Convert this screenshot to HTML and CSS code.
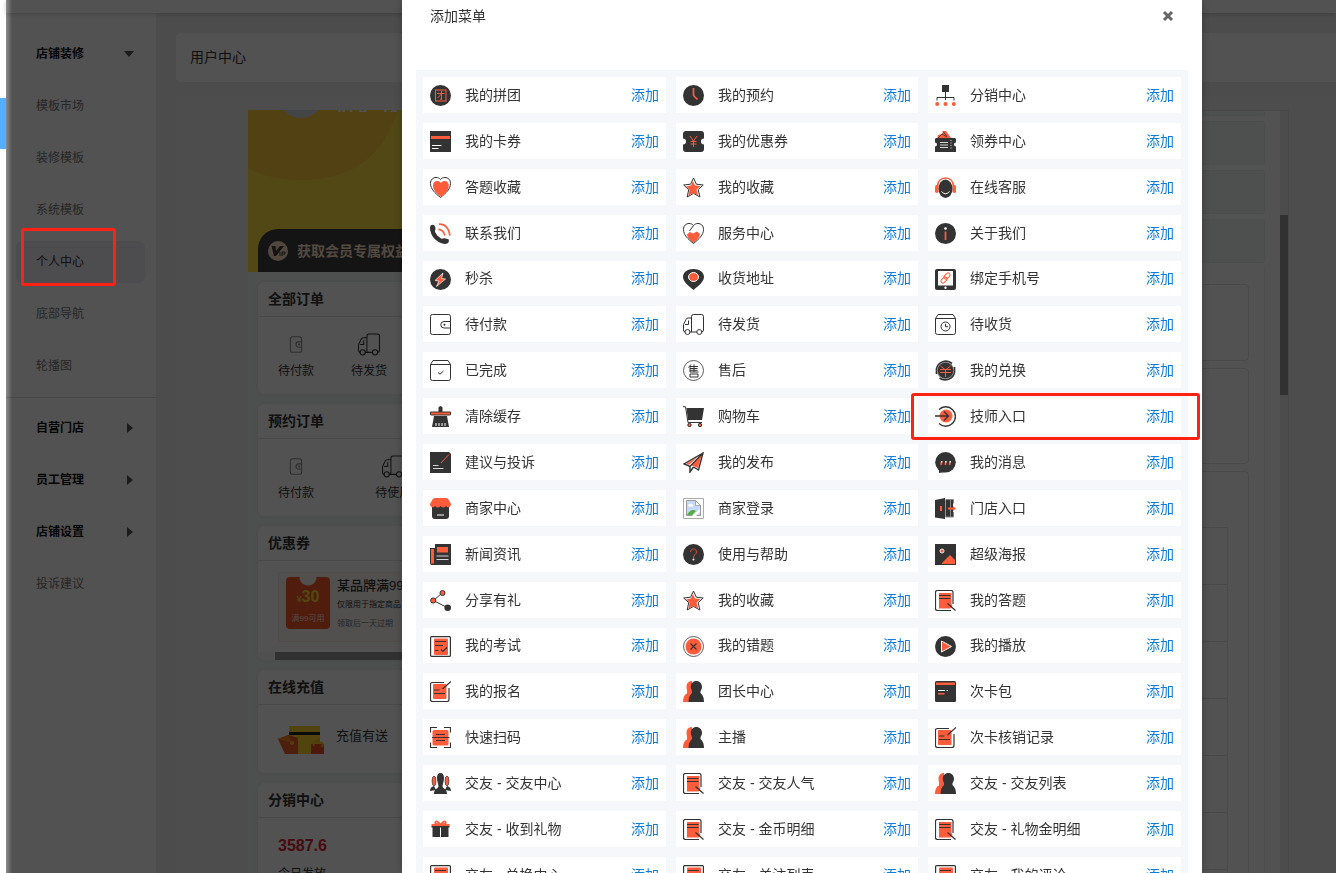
FILE: index.html
```html
<!DOCTYPE html>
<html lang="zh-CN">
<head>
<meta charset="utf-8">
<title>添加菜单</title>
<link rel="stylesheet" href="styles.css">
</head>
<body>
<svg class="sprite" aria-hidden="true">
<symbol id="tuan" viewBox="0 0 21 21"><circle class="d" cx="10.5" cy="10.5" r="10.5"/><rect class="so" x="5.5" y="5" width="10.5" height="11"/><path class="so" d="M7 8.5h7.500M11.500 6v8.500l-1.500-.5M11.500 9L7.500 13"/></symbol>
<symbol id="clock" viewBox="0 0 21 21"><circle class="d" cx="10.5" cy="10.5" r="10.5"/><path class="so w2" d="M10.500 3v7.500l4 4"/></symbol>
<symbol id="org" viewBox="0 0 21 21"><path class="d" d="M7 0h7v7H7z"/><path class="sd" d="M10.500 7v8M2 15.500v-3h17v3"/><circle class="o" cx="2.200" cy="19" r="2"/><circle class="o" cx="10.500" cy="19" r="2"/><circle class="o" cx="18.800" cy="19" r="2"/></symbol>
<symbol id="card" viewBox="0 0 21 21"><path class="d" d="M0 0h21v21H0z"/><path class="o" d="M1 5h19v3H1z"/><path class="sw" d="M2 14.500h9.500M2 17.500h6.500"/></symbol>
<symbol id="ticket" viewBox="0 0 21 21"><path class="d" d="M3 0h15q3 0 3 3v4.500a3 3 0 0 0 0 6V18q0 3-3 3H3q-3 0-3-3v-4.500a3 3 0 0 0 0-6V3q0-3 3-3z"/><path class="so" d="M7 5l3.500 5L14 5M10.500 10v6M7.500 10.500h6M7.500 13h6"/></symbol>
<symbol id="coupons" viewBox="0 0 21 21"><path class="o" d="M2 8l1-4 4-1 1-3h3l5 7z"/><path class="sd thin" d="M3 7l4-4 5 3M8 .5l4 5"/><path class="d" d="M1 7h19l1 1v3.500a2 2 0 0 0 0 4V21H0v-5.500a2 2 0 0 0 0-4V8z"/><path class="sw thin" d="M5 11.500h8M5 14h8M5 16.500h8"/><path class="sw thin" stroke-dasharray="1 1.500" d="M16 9v10"/></symbol>
<symbol id="heart" viewBox="0 0 21 21"><path class="sd" d="M10.500 20.500C5 16 .5 12 .5 6.500.5 2.500 3.200.5 6 .5c2 0 3.500.7 4.500 2 1-1.300 2.500-2 4.500-2 2.800 0 5.500 2 5.500 6 0 5.500-4.500 9.500-10 14z"/><path class="o" d="M11 20C6 16 3 13 3 8.500 3 5.500 5 4 7 4c1.500 0 3 .6 4 2 1-1.400 2.300-2 4-2 2 0 3.800 1.500 3.800 4.500C18.800 13 16 16 11 20z"/></symbol>
<symbol id="star" viewBox="0 0 21 21"><path class="sd" d="M10.500 1l2.900 6.200 6.800.8-5 4.700 1.700 7.300-6.400-3.600L4.200 20l1.500-7.300-5-4.700 6.900-.8z"/><path class="o" d="M10 4l2 4.500 5.500.6-4 3.700 1.800 6-5-2.700-5 2.700 1.200-6L3 9.500l4.900-1z"/></symbol>
<symbol id="headset" viewBox="0 0 21 21"><path class="so w2" d="M2.500 10C2.500 4 6 1 10.500 1s8 3 8 9"/><rect class="o" x="0" y="8" width="3.500" height="8" rx="1.700"/><rect class="o" x="17.500" y="8" width="3.500" height="8" rx="1.700"/><ellipse class="d" cx="10.500" cy="11.800" rx="7" ry="9.200"/><path class="sw" d="M6.500 14.500q4 4.500 8 0"/></symbol>
<symbol id="phone" viewBox="0 0 21 21"><path class="d" d="M.8 2.200Q3 1 4.500 2.500q1 1.500 1 4Q4.800 7.500 5 9q2 4.500 6.500 6.800 1.500-.6 3-.6l4 1.100q1 1.700-.5 3.800-2 1.200-4.700.7C6.500 19 1.500 14 .2 7.200Q-.3 3.500.8 2.200z"/><path class="so w2" d="M9 1.200Q18 .5 20 12.500M8.500 6.300q5 .3 6.300 6.200"/></symbol>
<symbol id="service" viewBox="0 0 21 21"><path class="o" d="M10.500 20C7 17 4.500 15 4 11.500l3-2.500 3 1.500L14 8.500l3 2.500c-.5 3.500-3.500 6.500-6.500 9z"/><path class="sd" d="M10.500 20.500C5 16 .5 12 .5 6.500.5 2.500 3.200.5 6 .5c2 0 3.500.7 4.500 2 1-1.300 2.500-2 4.500-2 2.800 0 5.500 2 5.500 6 0 5.500-4.500 9.500-10 14zM10.500 2.500L6.500 8"/></symbol>
<symbol id="info" viewBox="0 0 21 21"><circle class="d" cx="10.5" cy="10.5" r="10.5"/><circle class="w" cx="10.500" cy="5.500" r="1.300"/><path class="so w2" d="M10.500 8.500V17"/></symbol>
<symbol id="flash" viewBox="0 0 21 21"><circle class="d" cx="10.5" cy="10.5" r="10.5"/><path class="o" stroke="#fff" stroke-width=".7" d="M13 4l-8 7.500 4 .5-2.500 5.500L15.500 10l-4-.5z"/></symbol>
<symbol id="pin" viewBox="0 0 21 21"><path class="d" d="M10.500 21C6 17 0 13 0 8 0 3 4.500 0 10.500 0S21 3 21 8c0 5-6 9-10.500 13z"/><ellipse class="o" stroke="#fff" cx="10.500" cy="8" rx="5" ry="4.500"/></symbol>
<symbol id="bind" viewBox="0 0 21 21"><rect class="d" width="21" height="21" rx="2"/><path class="w" d="M3 2h15v14.500H3z"/><circle class="w" cx="10.500" cy="18.700" r="1.200"/><rect class="so" x="10" y="3.500" width="4" height="7" rx="2" transform="rotate(45 12 7)"/><rect class="so" x="7" y="7.500" width="4" height="7" rx="2" transform="rotate(45 9 11)"/></symbol>
<symbol id="wallet" viewBox="0 0 21 21"><rect class="sd" x=".5" y=".5" width="20" height="20" rx="2"/><path class="sd" fill="#fff" d="M20.500 7.500H14a3.200 3.200 0 0 0 0 6.500h6.500"/><circle class="d" cx="14.500" cy="10.800" r="1"/></symbol>
<symbol id="wallet-tall" viewBox="0 0 12 16"><rect class="sd" x=".7" y=".7" width="10.600" height="14.600" rx="2"/><path class="sd" d="M11 5.500H8.500a2.500 2.500 0 0 0 0 5H11"/><circle class="d" cx="9" cy="8" r="1"/></symbol>
<symbol id="truck" viewBox="0 0 21 21"><path class="sd" d="M8.500 18V2.500q0-2 2-2h8q2 0 2 2V16q0 2-2 2M14 18H6.500M2 18q-1.500 0-1.500-2v-5.500L3 5.500Q3.500 4 5 4h3.500M5.500 6.500v4H2"/><circle class="sd" cx="4.500" cy="18" r="2.500"/><circle class="sd" cx="16.300" cy="18" r="2.500"/></symbol>
<symbol id="boxclock" viewBox="0 0 21 21"><path class="sd" d="M.5 4.500v14q0 2 2 2h16q2 0 2-2v-14M.5 4.500h20L18 .5H3z"/><circle class="sd" cx="10.500" cy="12.500" r="4.500"/><path class="sd" d="M10.500 10v2.700H13"/></symbol>
<symbol id="boxcheck" viewBox="0 0 21 21"><path class="sd" d="M.5 4.500v14q0 2 2 2h16q2 0 2-2v-14M.5 4.500h20L18 .5H3z"/><path class="sd" d="M8 12.500l2 1.700 3.500-3.200"/></symbol>
<symbol id="sale" viewBox="0 0 21 21"><circle class="sd thin" cx="10.500" cy="10.500" r="10"/><path class="sd" d="M8 4.500L5.500 7.500M7 6.500V12M7 6.500h8M7 8.500h7.500M7 10.300h7.500M7 12h8.500M11 4.500V12M7 14h8v3H7z"/></symbol>
<symbol id="coin" viewBox="0 0 21 21"><circle class="d" cx="10.500" cy="10.500" r="8.500"/><path class="sd w2" d="M1.500 14V9A9.500 9.500 0 0 1 17 3.500M19.500 7v5A9.500 9.500 0 0 1 4.500 18"/><circle cx="10.500" cy="10.500" r="8.200" fill="none" stroke="#aaa" stroke-width=".7"/><path class="so" d="M5.500 6l5 4 5-4M10.500 9.500V17M5 9.500h11M5 12.500h11"/></symbol>
<symbol id="broom" viewBox="0 0 21 21"><path class="d" d="M8.500 1.500q2-3 4 0V6h-4zM0 6.500q0-1 1-1h19q1 0 1 1V8q0 1.500-2 1.500H2Q0 9.500 0 8zM4 10h13l2 11H2z"/><path class="o" d="M1 6.500h19v2H1z"/><path class="sw" d="M6 20v-3M9 20v-3M12 20v-3M15 20v-3"/></symbol>
<symbol id="cart" viewBox="0 0 21 21"><path class="d" d="M3.500 2H21l-2 12H5z"/><path class="sd" d="M0 .7h2.500L5 16.500h14"/><circle class="o" stroke="#333" cx="6.500" cy="19" r="1.700"/><circle class="o" stroke="#333" cx="17" cy="19" r="1.700"/></symbol>
<symbol id="enter" viewBox="0 0 21 21"><circle class="o" cx="11" cy="10" r="6.500"/><path class="sd w15" d="M4 3.500a9.700 9.700 0 1 1 0 14M0 10h13.500M9 5.500l4.500 4.500L9 14.500"/></symbol>
<symbol id="edit" viewBox="0 0 21 21"><path class="d" d="M0 0h19l2 2v19H0z"/><path class="so" d="M19 2.500L11 11"/><path class="sw thin" d="M3 13.500h5.500M3 16.500h10.500"/></symbol>
<symbol id="plane" viewBox="0 0 21 21"><path class="o" d="M3 12L19 2l-4 14-5-2-3-1z"/><path d="M6.500 13.500L18 2.500" fill="none" stroke="#fff" stroke-width="1.500"/><path class="sd w15" d="M20 1L1 12l6 2.500L20 1l-4.500 17-5-3M7 14.500v5.500l3.500-5"/></symbol>
<symbol id="chat" viewBox="0 0 21 21"><circle class="d" cx="10.500" cy="10.300" r="10.300"/><path class="d" d="M4 16v5l7-1z"/><path class="so w2" d="M6 13l.7-3.500M10.200 13l.7-3.500M14.500 13l.7-3.500"/><path class="sw w15" d="M6.600 10.500l.2-1.500M10.800 10.500l.2-1.500M15.100 10.500l.2-1.500"/></symbol>
<symbol id="shop" viewBox="0 0 21 21"><path class="d" d="M2 8h17v10q0 3-3 3H5q-3 0-3-3z"/><path class="o" d="M2.500 1.500Q3 0 5 0h11q2 0 2.500 1.500L21 6c0 4-4 4-5 2q-2.700 3-5.500 0Q7.700 11 5 8C4 10 0 10 0 6z"/><path class="sw" d="M7 17h7"/></symbol>
<symbol id="broken" viewBox="0 0 21 21"><path fill="#fff" stroke="#aaa" d="M.5.5h20v20H.5z"/><path fill="#c5d9f8" stroke="#999" d="M3.500 2.500h9l5 5v10h-14z"/><path fill="#fff" stroke="#999" stroke-width=".8" d="M12.500 2.500v5h5z"/><path fill="#fff" d="M5 8q0-2 2-2 2-1.500 3 1 1.500 1-.5 1.500H6z"/><path fill="#56ad3c" d="M4 17q4-7 9-4l-4 4z"/><path fill="#fff" d="M9 18l8-7v3l-4 4z"/></symbol>
<symbol id="door" viewBox="0 0 21 21"><path class="d" d="M0 2l10-2v21l-10-1.500zM10.500 2H18v17h-7.500z"/><path fill="none" stroke="#888" d="M10.500 1.500h8v4M18.500 14v5h-8M15.500 2v17"/><path class="o" d="M5 8h2v5H5zM13 9.500h5V8l3 2.500-3 2.500v-1.500h-5z"/></symbol>
<symbol id="news" viewBox="0 0 21 21"><path class="d" d="M5 0h16v21H2q-2 0-2-2V4h5z"/><path class="o" d="M1 5h3v14.500H1zM7 3h11v5.500H7z"/><path class="sw thin" d="M6.500 12h12M6.500 15.500h12"/></symbol>
<symbol id="help" viewBox="0 0 21 21"><circle class="d" cx="10.5" cy="10.5" r="10.5"/><path class="so thin" d="M7.500 8c0-4 6-4 6 0 0 2.500-3 2.500-3 6"/><circle class="w" cx="10.500" cy="15.500" r="1"/></symbol>
<symbol id="poster" viewBox="0 0 21 21"><path class="d" d="M0 0h21v21H0z"/><circle class="o" stroke="#eee" cx="7" cy="7" r="2"/><path class="o" d="M7 20v-1l8-8 5 5v4z"/></symbol>
<symbol id="share" viewBox="0 0 21 21"><path class="sd" d="M12 3L3.500 10.500 18 18"/><circle class="o" stroke="#333" cx="12.500" cy="3" r="2.500"/><circle class="o" stroke="#333" cx="3.200" cy="10.500" r="2.600"/><circle class="d" cx="17.700" cy="17.700" r="3.300"/></symbol>
<symbol id="note" viewBox="0 0 21 21"><path class="o" d="M4 3h12.500v11l1 2-2 2.500H4z"/><path class="sd w12" d="M18 14V2.500q0-2-2-2H2.500q-2 0-2 2v16q0 2 2 2H16M4 5.500h11.500M4 8.500h11.500M12.500 13.500l8 7"/></symbol>
<symbol id="exam" viewBox="0 0 21 21"><rect class="sd w12" x=".6" y=".6" width="19.800" height="19.800" rx="1"/><rect class="o" x="4" y="2.500" width="14" height="16.500" rx="1"/><path class="sd w12" d="M5 5.500h11M5 9.500h8M5 14.500h3.500M11 13.500l2 2 4-4"/></symbol>
<symbol id="wrong" viewBox="0 0 21 21"><circle class="sd thin" cx="10.500" cy="10.500" r="10"/><circle class="o" cx="10.500" cy="10.500" r="8"/><path class="sd w12" d="M7.500 7.500l6 6M13.500 7.500l-6 6"/></symbol>
<symbol id="play" viewBox="0 0 21 21"><circle class="d" cx="10.5" cy="10.5" r="10.5"/><path class="o" stroke="#fff" d="M6.500 5v11l10-5.500z"/></symbol>
<symbol id="sign" viewBox="0 0 21 21"><rect class="o" x="3" y="3" width="13.500" height="15" rx="1"/><path class="sd w12" d="M14 1.500H2.500q-2 0-2 2v15q0 2 2 2H17q2 0 2-2V7M4 9h5.500M4 12.500h11M12.500 8L21 .5"/></symbol>
<symbol id="people" viewBox="0 0 21 21"><path class="o" d="M9 0C5.500 0 3.500 2.500 3.500 6c0 2 1 4 .5 6.500Q0 14 0 21h9z"/><path class="d" d="M13.300 0C10 0 7.800 2.500 7.800 6c0 2.500 1.700 3.500 1.200 6q-3.500 3-3.500 9H21q0-6-3.500-9c-.5-2.500 1.500-3.500 1.500-6 0-3.500-2.300-6-5.700-6z"/></symbol>
<symbol id="pack" viewBox="0 0 21 21"><rect class="d" width="21" height="21" rx="1.500"/><path class="o" d="M1 1.500h19V4H1zM3 12h6.500v1.500H3z"/><path class="sw" d="M3 9.500h7M11.500 9.500h1.500"/></symbol>
<symbol id="scan" viewBox="0 0 21 21"><rect class="o" x="2.500" y="3" width="16" height="15.500" rx="1.500"/><path class="sd w12" d="M.5 5.500v-5H7M14 .5h6.500v5M20.500 15.500v5H14M7 20.500H.5v-5M2 10.500h17.500M6 7.500h9M6 13.500h9"/></symbol>
<symbol id="trio" viewBox="0 0 21 21"><ellipse class="o" stroke="#333" stroke-width=".7" cx="4" cy="8" rx="1.900" ry="5"/><ellipse class="o" stroke="#333" stroke-width=".7" cx="17" cy="8" rx="1.900" ry="5"/><path class="d" d="M0 18q0-4 4-5l2 4zM21 18q0-4-4-5l-2 4z"/><path class="d" d="M10.500 0C8 0 7 2 7 5s1 5 1.500 8c0 3-4.500 2-4.500 8h13c0-6-4.500-5-4.500-8C13 10 14 8 14 5s-1-5-3.500-5z"/></symbol>
<symbol id="gift" viewBox="0 0 21 21"><path class="so w2" d="M10.500 6Q4 5 5.500 3t5 3Q14 1 15.500 3t-5 3"/><path class="o" d="M1.500 5h18v2.500h-18z"/><path class="d" d="M1.500 7h18v1.500h-18zM2.500 8.500H10V18H2.500zM11 8.500h7.500V18H11z"/></symbol>
</svg>

<div class="shell">
  <div class="edge"><span class="edge-mark"></span></div>
  <div class="app">
    <div class="topbar"></div>
    <div class="workspace">
      <nav class="sidebar">
        <a class="nav head" href="#">店铺装修<i class="caret down"></i></a>
        <a class="nav" href="#">模板市场</a>
        <a class="nav" href="#">装修模板</a>
        <a class="nav" href="#">系统模板</a>
        <a class="nav active" href="#">个人中心</a>
        <a class="nav" href="#">底部导航</a>
        <a class="nav" href="#">轮播图</a>
        <hr class="divider">
        <a class="nav head" href="#">自营门店<i class="caret"></i></a>
        <a class="nav head" href="#">员工管理<i class="caret"></i></a>
        <a class="nav head" href="#">店铺设置<i class="caret"></i></a>
        <a class="nav" href="#">投诉建议</a>
      </nav>
      <main class="main">
        <h1 class="page-title">用户中心</h1>
        <div class="panel">
          <div class="phone">
            <section class="hero">
              <svg class="hero-art" viewBox="0 0 388 162" preserveAspectRatio="xMinYMin slice" aria-hidden="true"><path fill="#ffe045" d="M0 0h388v162H0z"/><path fill="#fccb3c" d="M0 0h150Q128 70 55 70 20 70 0 58z"/><path fill="#fccb3c" d="M125 162L388 50v112z" opacity=".5"/><circle cx="53" cy="-15" r="23" fill="#d2d6de"/></svg>
              <div class="hero-id">ID:9 &nbsp; 18.978</div>
              <div class="vip"><svg class="vip-badge" viewBox="0 0 20 20" aria-hidden="true"><circle cx="10" cy="10" r="10" fill="#ffdcc0"/><path d="M3.500 5h4l.5 5 4-5h4l-8 10H6z" fill="#403a38"/><path d="M12 11v4M14 15v-4h3v2h-3" fill="none" stroke="#403a38"/></svg>获取会员专属权益</div>
            </section>
            <section class="card">
              <h2>全部订单</h2>
              <div class="orders">
                <div class="order"><svg class="faded"><use href="#wallet-tall"/></svg>待付款</div>
                <div class="order"><svg><use href="#truck"/></svg>待发货</div>
                <div class="order"><svg><use href="#boxclock"/></svg>待收货</div>
                <div class="order"><svg><use href="#boxcheck"/></svg>已完成</div>
                <div class="order"><svg><use href="#sale"/></svg>售后</div>
              </div>
            </section>
            <section class="card">
              <h2>预约订单</h2>
              <div class="orders">
                <div class="order"><svg class="faded"><use href="#wallet-tall"/></svg>待付款</div>
                <div class="order"><svg><use href="#truck"/></svg>待使用</div>
                <div class="order"><svg><use href="#boxcheck"/></svg>已完成</div>
                <div class="order"><svg><use href="#sale"/></svg>售后</div>
              </div>
            </section>
            <section class="card">
              <h2>优惠券</h2>
              <div class="coupon-area">
                <div class="coupon">
                  <div class="coupon-face"><strong><small>¥</small>30</strong><span>满99可用</span></div>
                  <div class="coupon-text"><b>某品牌满99元</b><span>仅限用于指定商品</span><em>领取后一天过期</em></div>
                </div>
              </div>
              <div class="hscroll"><span></span></div>
            </section>
            <section class="card">
              <h2>在线充值</h2>
              <div class="recharge">
                <svg class="recharge-art" viewBox="0 0 47 28" aria-hidden="true"><path fill="#ffd22e" d="M11 0h31v28H11z"/><path fill="#222" d="M11 6h31v3H11z"/><path fill="#ee5a2a" d="M0 13l10-4 10 3v16H7z"/><path fill="#f88a2a" d="M0 13l10-4 4 8z"/><circle cx="14" cy="17" r="2" fill="#ffc02e"/><path fill="#e94b24" d="M33 18h13v10H33z"/><path fill="none" stroke="#ffbe2a" stroke-width="2" d="M36 20q-2-5 3-4l1-3 2 4q4-1 2 4"/></svg>
                充值有送
              </div>
            </section>
            <section class="card">
              <h2>分销中心</h2>
              <div class="stats"><strong>3587.6</strong><span>今日发放</span></div>
            </section>
          </div>
          <div class="editor">
            <div class="editor-page">
              <div class="block stub"></div><div class="block"></div><div class="block"></div><div class="block"></div>
              <div class="fields">
                <div class="field-box first"></div>
                <div class="field-box second"></div>
                <div class="field-box grid"><i></i><i></i><i></i><i></i><i></i><i></i><i></i></div>
              </div>
            </div>
            <div class="vscroll"><span></span></div>
          </div>
        </div>
      </main>
    </div>
  </div>
</div>

<div class="overlay">
  <div class="modal" role="dialog" aria-labelledby="dialog-title">
    <header class="modal-head">
      <h2 id="dialog-title">添加菜单</h2>
      <button class="close" type="button" aria-label="关闭"><svg viewBox="0 0 12 12"><path d="M2 2l8 8M10 2l-8 8"/></svg></button>
    </header>
    <ul class="menu">
      <li><svg><use href="#tuan"/></svg><span>我的拼团</span><button type="button">添加</button></li>
      <li><svg><use href="#clock"/></svg><span>我的预约</span><button type="button">添加</button></li>
      <li><svg><use href="#org"/></svg><span>分销中心</span><button type="button">添加</button></li>
      <li><svg><use href="#card"/></svg><span>我的卡券</span><button type="button">添加</button></li>
      <li><svg><use href="#ticket"/></svg><span>我的优惠券</span><button type="button">添加</button></li>
      <li><svg><use href="#coupons"/></svg><span>领券中心</span><button type="button">添加</button></li>
      <li><svg><use href="#heart"/></svg><span>答题收藏</span><button type="button">添加</button></li>
      <li><svg><use href="#star"/></svg><span>我的收藏</span><button type="button">添加</button></li>
      <li><svg><use href="#headset"/></svg><span>在线客服</span><button type="button">添加</button></li>
      <li><svg><use href="#phone"/></svg><span>联系我们</span><button type="button">添加</button></li>
      <li><svg><use href="#service"/></svg><span>服务中心</span><button type="button">添加</button></li>
      <li><svg><use href="#info"/></svg><span>关于我们</span><button type="button">添加</button></li>
      <li><svg><use href="#flash"/></svg><span>秒杀</span><button type="button">添加</button></li>
      <li><svg><use href="#pin"/></svg><span>收货地址</span><button type="button">添加</button></li>
      <li><svg><use href="#bind"/></svg><span>绑定手机号</span><button type="button">添加</button></li>
      <li><svg><use href="#wallet"/></svg><span>待付款</span><button type="button">添加</button></li>
      <li><svg><use href="#truck"/></svg><span>待发货</span><button type="button">添加</button></li>
      <li><svg><use href="#boxclock"/></svg><span>待收货</span><button type="button">添加</button></li>
      <li><svg><use href="#boxcheck"/></svg><span>已完成</span><button type="button">添加</button></li>
      <li><svg><use href="#sale"/></svg><span>售后</span><button type="button">添加</button></li>
      <li><svg><use href="#coin"/></svg><span>我的兑换</span><button type="button">添加</button></li>
      <li><svg><use href="#broom"/></svg><span>清除缓存</span><button type="button">添加</button></li>
      <li><svg><use href="#cart"/></svg><span>购物车</span><button type="button">添加</button></li>
      <li><svg><use href="#enter"/></svg><span>技师入口</span><button type="button">添加</button></li>
      <li><svg><use href="#edit"/></svg><span>建议与投诉</span><button type="button">添加</button></li>
      <li><svg><use href="#plane"/></svg><span>我的发布</span><button type="button">添加</button></li>
      <li><svg><use href="#chat"/></svg><span>我的消息</span><button type="button">添加</button></li>
      <li><svg><use href="#shop"/></svg><span>商家中心</span><button type="button">添加</button></li>
      <li><svg><use href="#broken"/></svg><span>商家登录</span><button type="button">添加</button></li>
      <li><svg><use href="#door"/></svg><span>门店入口</span><button type="button">添加</button></li>
      <li><svg><use href="#news"/></svg><span>新闻资讯</span><button type="button">添加</button></li>
      <li><svg><use href="#help"/></svg><span>使用与帮助</span><button type="button">添加</button></li>
      <li><svg><use href="#poster"/></svg><span>超级海报</span><button type="button">添加</button></li>
      <li><svg><use href="#share"/></svg><span>分享有礼</span><button type="button">添加</button></li>
      <li><svg><use href="#star"/></svg><span>我的收藏</span><button type="button">添加</button></li>
      <li><svg><use href="#note"/></svg><span>我的答题</span><button type="button">添加</button></li>
      <li><svg><use href="#exam"/></svg><span>我的考试</span><button type="button">添加</button></li>
      <li><svg><use href="#wrong"/></svg><span>我的错题</span><button type="button">添加</button></li>
      <li><svg><use href="#play"/></svg><span>我的播放</span><button type="button">添加</button></li>
      <li><svg><use href="#sign"/></svg><span>我的报名</span><button type="button">添加</button></li>
      <li><svg><use href="#people"/></svg><span>团长中心</span><button type="button">添加</button></li>
      <li><svg><use href="#pack"/></svg><span>次卡包</span><button type="button">添加</button></li>
      <li><svg><use href="#scan"/></svg><span>快速扫码</span><button type="button">添加</button></li>
      <li><svg><use href="#people"/></svg><span>主播</span><button type="button">添加</button></li>
      <li><svg><use href="#sign"/></svg><span>次卡核销记录</span><button type="button">添加</button></li>
      <li><svg><use href="#trio"/></svg><span>交友 - 交友中心</span><button type="button">添加</button></li>
      <li><svg><use href="#note"/></svg><span>交友 - 交友人气</span><button type="button">添加</button></li>
      <li><svg><use href="#people"/></svg><span>交友 - 交友列表</span><button type="button">添加</button></li>
      <li><svg><use href="#gift"/></svg><span>交友 - 收到礼物</span><button type="button">添加</button></li>
      <li><svg><use href="#note"/></svg><span>交友 - 金币明细</span><button type="button">添加</button></li>
      <li><svg><use href="#note"/></svg><span>交友 - 礼物金明细</span><button type="button">添加</button></li>
      <li><svg><use href="#exam"/></svg><span>交友 - 兑换中心</span><button type="button">添加</button></li>
      <li><svg><use href="#exam"/></svg><span>交友 - 关注列表</span><button type="button">添加</button></li>
      <li><svg><use href="#exam"/></svg><span>交友 - 我的评论</span><button type="button">添加</button></li>
    </ul>
  </div>
</div>
<div class="marker marker-nav"></div>
<div class="marker marker-item"></div>
</body>
</html>
```
FILE: styles.css
```css
* { box-sizing: border-box; }
body {
  margin: 0;
  height: 100vh;
  overflow: hidden;
  background: #fff;
  color: #333;
  font: 14px/20px "Liberation Sans", "Noto Sans CJK SC", sans-serif;
}
h1, h2, ul { margin: 0; padding: 0; font-size: 14px; font-weight: 400; }
ul { list-style: none; }
a { color: inherit; text-decoration: none; }
button { border: 0; padding: 0; background: none; font: inherit; cursor: pointer; }

/* icon sprite */
.sprite { position: absolute; width: 0; height: 0; }
.d { fill: #333; }
.o { fill: #ff5c3c; }
.w { fill: #fff; }
.sd { fill: none; stroke: #333; stroke-width: 1; }
.so { fill: none; stroke: #ff5c3c; stroke-width: 1; }
.sw { fill: none; stroke: #fff; stroke-width: 1; }
.thin { stroke-width: .8; }
.w12 { stroke-width: 1.2; }
.w15 { stroke-width: 1.4; }
.w2 { stroke-width: 1.7; }

/* page behind the dialog */
.shell { display: flex; height: 100vh; }
.edge { width: 6px; padding-top: 98px; flex: none; }
.edge-mark { display: block; height: 51px; background: #54b0ff; }
.app { flex: 1; min-width: 0; display: flex; flex-direction: column; background: #ededf0; }
.topbar { height: 13px; flex: none; background: #fff; box-shadow: 0 1px 5px rgba(0, 0, 0, .2); z-index: 1; }
.workspace { flex: 1; min-height: 0; display: flex; }
.sidebar {
  width: 150px;
  flex: none;
  display: flex;
  flex-direction: column;
  gap: 10px;
  padding: 20px 11px 0 10px;
  background: #fff;
  font-size: 12px;
}
.nav {
  height: 42px;
  flex: none;
  display: flex;
  align-items: center;
  justify-content: space-between;
  padding: 0 11px 0 20px;
  border-radius: 6px;
  color: #777;
}
.nav.head { color: #111; font-weight: 700; }
.nav.active { background: #f0f0f5; color: #333; }
.caret { margin-right: 1px; border: 5px solid transparent; border-left: 6px solid #555; border-right: 0; }
.caret.down { margin-right: 0; border: 5px solid transparent; border-top: 6px solid #555; border-bottom: 0; }
.divider { width: auto; margin: 0 -11px -1px -10px; border: 0; border-top: 1px solid #ddd; }
.main { flex: 1; min-width: 0; display: flex; flex-direction: column; gap: 14px; padding: 20px 0 0 20px; }
.page-title { padding: 14px 14px 15px; border-radius: 5px 0 0 5px; background: #fff; }
.panel {
  flex: 1;
  min-height: 0;
  display: flex;
  justify-content: space-between;
  padding: 14px 47px 0 72px;
  background: #f0f0f0;
}
.phone { width: 388px; overflow: hidden; background: #f2f7f6; }
.hero { position: relative; height: 162px; margin-bottom: 10px; padding-left: 10px; display: flex; flex-direction: column; justify-content: space-between; overflow: hidden; }
.hero-art { position: absolute; inset: 0; width: 100%; height: 100%; }
.hero-id { position: relative; height: 2px; padding-left: 79px; line-height: 0; font-size: 16px; font-weight: 700; color: #fff; display: flex; align-items: flex-end; overflow: hidden; }
.vip {
  position: relative;
  height: 43px;
  display: flex;
  align-items: center;
  gap: 9px;
  padding-left: 10px;
  border-radius: 20px 20px 0 0;
  background: #404040;
  color: #ffe2c8;
  font-weight: 700;
}
.vip-badge { width: 20px; height: 20px; }
.card { margin: 0 10px 10px; border-radius: 6px; background: #fff; box-shadow: 0 0 5px rgba(0, 0, 0, .08); overflow: hidden; }
.card h2 { padding: 7px 10px; border-bottom: 1px solid #e4e4e4; font-weight: 700; }
.orders { display: flex; justify-content: space-between; padding: 16px 20px 13px; font-size: 12px; }
.order { width: 36px; display: flex; flex-direction: column; align-items: center; gap: 5px; line-height: 20px; white-space: nowrap; }
.order svg { width: 22px; height: 23px; }
.order svg.faded { height: 17px; margin: 3px 0; opacity: .55; }
.coupon-area { padding: 11px 20px 10px; }
.coupon { display: flex; gap: 7px; padding: 4px 7px 8px; border: 1px solid #f8eded; background: #fdf6f6; }
.coupon-face { width: 44px; height: 52px; border-radius: 4px; display: flex; flex-direction: column; align-items: center; justify-content: flex-end; color: #ffe0d0; font-size: 8px; line-height: 20px; background: radial-gradient(circle at 50% 0, #fdf6f6 0 8px, #f8582c 9px); }
.coupon-face strong { color: #ffd938; font-size: 16px; line-height: 20px; }
.coupon-face small { font-size: 9px; }
.coupon-text { display: flex; flex-direction: column; font-size: 8px; line-height: 19px; white-space: nowrap; }
.coupon-text b { font-size: 13px; line-height: 18px; font-weight: 500; }
.coupon-text span { color: #333; }
.coupon-text em { color: #777; font-style: normal; }
.hscroll { height: 8px; padding-left: 17px; background: #f8f8f8; }
.hscroll span { display: block; height: 8px; background: #999; }
.recharge { display: flex; align-items: center; gap: 11px; height: 68px; padding: 0 20px 7px; font-size: 13px; }
.recharge-art { width: 47px; height: 28px; margin-top: 8px; }
.stats { display: flex; flex-direction: column; gap: 8px; padding: 18px 20px; font-size: 12px; }
.stats strong { color: #d9252f; font-size: 16px; }
.editor { width: 629px; display: flex; border: 1px solid #ddd; border-bottom: 0; background: #fff; }
.editor-page { flex: 1; min-width: 0; padding: 0 15px; overflow: hidden; }
.block { height: 44px; margin-bottom: 5px; border: 1px solid #e3eeeb; border-radius: 3px; background: #eff7f5; }
.block.stub { height: 5px; border-top: 0; }
.fields { padding: 16px 15px; border-right: 1px solid #eee; display: flex; flex-direction: column; gap: 7px; }
.field-box { border: 1px solid #e2e2e2; border-radius: 4px; }
.field-box.first { height: 77px; }
.field-box.second { height: 96px; }
.field-box.grid { padding: 55px 20px 0; }
.grid i { display: block; height: 57px; border: 1px solid #e2e2e2; border-bottom: 0; }
.vscroll { width: 8px; padding-top: 104px; background: #ececec; }
.vscroll span { display: block; height: 180px; background: #999; }

/* dialog */
.overlay {
  position: fixed;
  inset: 0 0 0 6px;
  z-index: 2;
  padding: 0 134px 0 396px;
  background: linear-gradient(90deg, rgba(0, 0, 0, .45), rgba(0, 0, 0, .68) 6px);
}
.modal { height: 100%; padding: 0 14px; background: #fff; overflow: hidden; box-shadow: 0 0 10px rgba(0, 0, 0, .25); }
.modal-head { height: 70px; display: flex; justify-content: space-between; align-items: flex-start; padding: 6px 14px; }
.close { width: 12px; height: 20px; display: flex; align-items: center; }
.close svg { width: 12px; height: 12px; }
.close path { fill: none; stroke: #666; stroke-width: 3; }
.menu {
  display: grid;
  grid-template-columns: 243fr 242fr 253fr;
  grid-auto-rows: 36px 36px 36px 36px 35px 36px 36px 36px;
  gap: 10px;
  padding: 7px;
  background: #f6f7fa;
}
.menu li { display: flex; align-items: center; gap: 14px; padding: 0 7px 1px; background: #fff; }
.menu svg { width: 21px; height: 21px; flex: none; margin-top: 2px; }
.menu span { flex: 1; white-space: nowrap; }
.menu button { color: #0b7ddb; }

/* red frames drawn over the page */
.marker { position: absolute; z-index: 3; border: 3px solid #ff2113; border-radius: 3px; pointer-events: none; }
.marker-nav { left: 21px; top: 228px; width: 95px; height: 58px; }
.marker-item { left: 911px; top: 393px; width: 289px; height: 47px; }
```
